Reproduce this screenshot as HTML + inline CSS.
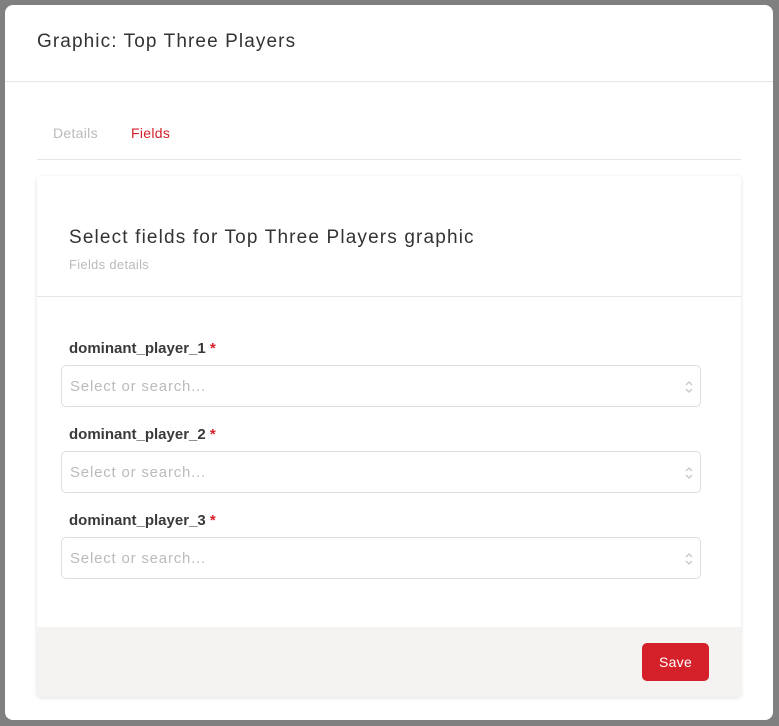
<!DOCTYPE html>
<html><head><style>
body{margin:0;width:779px;height:726px;background:#808080;font-family:"Liberation Sans",sans-serif;position:relative;overflow:hidden}
.m{position:absolute;left:5px;top:5px;width:768px;height:715px;background:#fff;border-radius:8px}
.h{position:absolute;left:32px;top:26px;font-size:19px;color:#333;letter-spacing:1.1px}
.hl{position:absolute;left:0;right:0;top:76px;border-top:1px solid #e6e6e6}
.t{position:absolute;top:120px;font-size:14px;letter-spacing:0.3px}
.tl{position:absolute;left:32px;width:704px;top:154px;border-top:1px solid #e6e6e6}
.c{position:absolute;left:32px;top:171px;width:704px;height:521px;background:#fff;border-radius:4px;box-shadow:0 1px 4px rgba(0,0,0,.12);overflow:hidden}
.ct{position:absolute;left:32px;top:51px;font-size:19px;color:#333;letter-spacing:1.15px}
.cs{position:absolute;left:32px;top:81px;font-size:13px;color:#bbb;letter-spacing:0.3px}
.cl{position:absolute;left:0;right:0;top:120px;border-top:1px solid #e6e6e6}
.lb{position:absolute;left:32px;font-size:15px;color:#3a3a3a;font-weight:bold}
.lb span{color:#d42029}
.s{position:absolute;left:24px;width:638px;height:40px;border:1px solid #ddd;border-radius:5px;font-size:15px;color:#bbb;line-height:42px;box-sizing:content-box;letter-spacing:0.8px}
.s b{font-weight:normal;padding-left:8px}
.s svg{position:absolute;right:6px;top:12px}
.f{position:absolute;left:0;right:0;bottom:0;height:70px;background:#f4f3f2}
.btn{position:absolute;left:605px;top:16px;width:67px;height:38px;background:#d42029;border-radius:5px;color:#fff;font-size:14px;text-align:center;line-height:39px;letter-spacing:0.3px}
</style></head><body>
<div class="m">
<div class="h">Graphic: Top Three Players</div>
<div class="hl"></div>
<div class="t" style="left:48px;color:#bbb">Details</div>
<div class="t" style="left:126px;color:#d42029">Fields</div>
<div class="tl"></div>
<div class="c">
<div class="ct">Select fields for Top Three Players graphic</div>
<div class="cs">Fields details</div>
<div class="cl"></div>
<div class="lb" style="top:164px">dominant_player_1 <span>*</span></div>
<div class="s" style="top:189px"><b>Select or search...</b><svg width="10" height="18" viewBox="0 0 10 18"><path d="M2 7L5 4L8 7M2 11L5 14L8 11" fill="none" stroke="#ccc" stroke-width="1.5"/></svg></div>
<div class="lb" style="top:250px">dominant_player_2 <span>*</span></div>
<div class="s" style="top:275px"><b>Select or search...</b><svg width="10" height="18" viewBox="0 0 10 18"><path d="M2 7L5 4L8 7M2 11L5 14L8 11" fill="none" stroke="#ccc" stroke-width="1.5"/></svg></div>
<div class="lb" style="top:336px">dominant_player_3 <span>*</span></div>
<div class="s" style="top:361px"><b>Select or search...</b><svg width="10" height="18" viewBox="0 0 10 18"><path d="M2 7L5 4L8 7M2 11L5 14L8 11" fill="none" stroke="#ccc" stroke-width="1.5"/></svg></div>
<div class="f"><div class="btn">Save</div></div>
</div>
</div>
</body></html>
